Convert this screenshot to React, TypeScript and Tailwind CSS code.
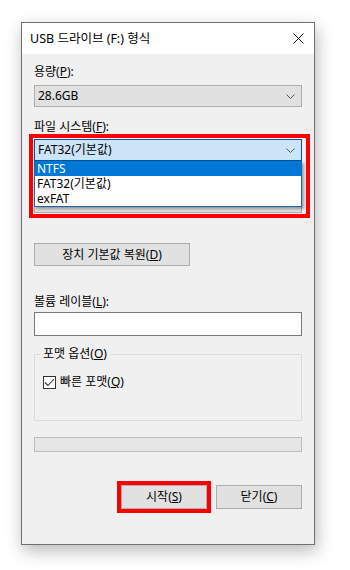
import React from "react";

const font = { fontFamily: '"Noto Sans", "Noto Sans CJK KR", sans-serif' };

const Chevron = () => (
    <svg width="9" height="5" viewBox="0 0 9 5" className="shrink-0">
        <path d="M0.5 0.5 L4.5 4.5 L8.5 0.5" fill="none" stroke="#5a5a5a" strokeWidth="1" />
    </svg>
);

const Label = ({ children }: { children: React.ReactNode }) => (
    <div className="h-[16px] text-[12px] leading-[16px] text-black">{children}</div>
);

const App = () => {
    return (
        <div className="w-[350px] h-[570px] bg-white overflow-hidden pt-[22px] pl-[21px]" style={font}>
            <div className="relative w-[294px] h-[523px] border border-[#6f6f6f] bg-[#f0f0f0] shadow-[2px_6px_16px_rgba(0,0,0,0.28)]">
                {/* title bar */}
                <div className="h-[31px] bg-white flex items-center justify-between pl-[8px] pr-[10px]">
                    <span className="text-[12.5px] text-black leading-[16px]">USB 드라이브 (F:) 형식</span>
                    <svg width="11" height="11" viewBox="0 0 11 11">
                        <path d="M0.5 0.5 L10.5 10.5 M10.5 0.5 L0.5 10.5" stroke="#111" strokeWidth="1" />
                    </svg>
                </div>

                <div className="px-[12px]">
                    <div className="mt-[10px]">
                        <Label>
                            용량(<u>P</u>):
                        </Label>
                    </div>
                    <div className="mt-[5px] h-[22px] w-[268px] border border-[#adadad] bg-[#e1e1e1] flex items-center justify-between pl-[3px] pr-[6px]">
                        <span className="text-[12px] leading-[16px]">28.6GB</span>
                        <Chevron />
                    </div>

                    <div className="mt-[12px]">
                        <Label>
                            파일 시스템(<u>F</u>):
                        </Label>
                    </div>
                    <div className="mt-[4px] h-[22px] w-[268px] border border-[#005499] bg-[#cce4f7] flex items-center justify-between pl-[3px] pr-[6px]">
                        <span className="text-[12px] leading-[16px]">FAT32(기본값)</span>
                        <Chevron />
                    </div>

                    {/* allocation size row, hidden under the open list */}
                    <div className="mt-[8px] h-[16px]" />
                    <div className="mt-[6px] h-[22px] w-[268px] border border-[#adadad] bg-[#e1e1e1] flex items-center justify-end pr-[6px]">
                        <Chevron />
                    </div>

                    <div className="mt-[30px] h-[23px] w-[156px] border border-[#adadad] bg-[#e1e1e1] flex items-center justify-center">
                        <span className="text-[12px] leading-[16px]">
                            장치 기본값 복원(<u>D</u>)
                        </span>
                    </div>

                    <div className="mt-[28px]">
                        <Label>
                            볼륨 레이블(<u>L</u>):
                        </Label>
                    </div>
                    <div className="mt-[2px] h-[24px] w-[268px] border border-[#7a7a7a] bg-white" />

                    {/* format options group */}
                    <div className="relative mt-[18px] h-[67px] w-[268px] border border-[#dcdcdc]">
                        <span className="absolute -top-[9px] left-[5px] bg-[#f0f0f0] px-[3px] text-[12px] leading-[16px]">
                            포맷 옵션(<u>O</u>)
                        </span>
                        <div className="pt-[19px] pl-[8px] flex items-center gap-[4px] h-[35px]">
                            <div className="w-[13px] h-[13px] border border-[#333] bg-white flex items-center justify-center">
                                <svg width="11" height="9" viewBox="0 0 11 9">
                                    <path d="M1 4.5 L4 7.5 L10 1" fill="none" stroke="#333" strokeWidth="1.1" />
                                </svg>
                            </div>
                            <span className="text-[12px] leading-[16px]">
                                빠른 포맷(<u>Q</u>)
                            </span>
                        </div>
                    </div>

                    <div className="mt-[16px] h-[15px] w-[268px] border border-[#bcbcbc] bg-[#e6e6e6]" />

                    <div className="mt-[33px] w-[268px] flex justify-end gap-[9px]">
                        <div className="h-[24px] w-[86px] border border-[#adadad] bg-[#e1e1e1] flex items-center justify-center">
                            <span className="text-[12px] leading-[16px]">
                                시작(<u>S</u>)
                            </span>
                        </div>
                        <div className="h-[24px] w-[86px] border border-[#adadad] bg-[#e1e1e1] flex items-center justify-center">
                            <span className="text-[12px] leading-[16px]">
                                닫기(<u>C</u>)
                            </span>
                        </div>
                    </div>
                </div>

                {/* open dropdown list */}
                <div className="absolute left-[12px] top-[138px] w-[268px] border-x border-b border-[#1b64a8] bg-white shadow-[2px_2px_3px_rgba(0,0,0,0.35)]">
                    <div className="h-[15px] bg-[#0078d7] text-white text-[12px] leading-[15px] pl-[2px]">NTFS</div>
                    <div className="h-[15px] text-black text-[12px] leading-[15px] pl-[2px]">FAT32(기본값)</div>
                    <div className="h-[15px] text-black text-[12px] leading-[15px] pl-[2px]">exFAT</div>
                </div>

                {/* red annotation boxes */}
                <div className="absolute left-[7px] top-[111px] w-[281px] h-[84px] border-[4px] border-[#ff0000]" />
                <div className="absolute left-[95px] top-[458px] w-[94px] h-[32px] border-[4px] border-[#ff0000]" />
            </div>
        </div>
    );
};

export default App;
